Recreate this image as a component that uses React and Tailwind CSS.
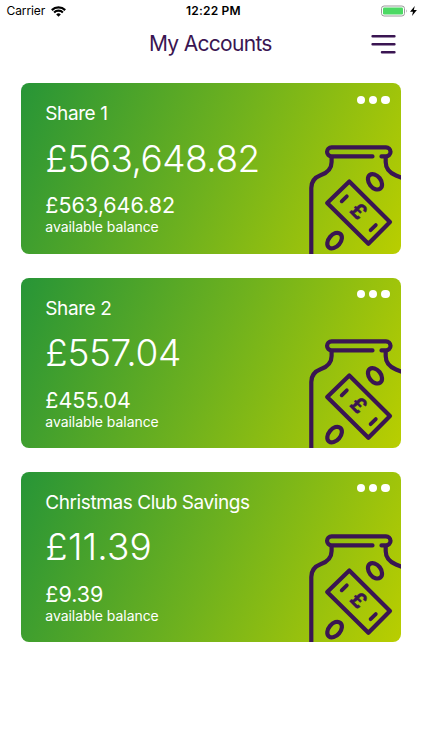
import React from 'react';

const accounts = [
  { name: 'Share 1', balance: '£563,648.82', available: '£563,646.82', tracking: 'tracking-[-0.5px]' },
  { name: 'Share 2', balance: '£557.04', available: '£455.04', tracking: 'tracking-[-0.35px]' },
  { name: 'Christmas Club Savings', balance: '£11.39', available: '£9.39', tracking: 'tracking-[0.15px]' },
];

const StatusBar = () => (
  <div className="relative flex h-[22px] items-center justify-between pl-[6.5px] pr-[4px] text-[12px] leading-[22px] text-black">
    <div className="flex items-center gap-[6px]">
      <span className="tracking-[-0.1px]">Carrier</span>
      <svg width="15" height="11" viewBox="0 0 15 11" fill="none" stroke="#000" strokeWidth="2.2">
        <path d="M0.8 4.1a9.6 9.6 0 0 1 13.4 0" />
        <path d="M3.1 6.5a6.3 6.3 0 0 1 8.8 0" />
        <path d="M7.5 10.8L5.2 8.4a3.3 3.3 0 0 1 4.6 0z" fill="#000" stroke="none" />
      </svg>
    </div>
    <span className="absolute left-[186px] top-0 font-semibold tracking-[0.2px]">12:22 PM</span>
    <svg width="37" height="12" viewBox="381 4.5 37 12">
      <rect x="381.5" y="5.5" width="23" height="10" rx="2.6" fill="#fff" stroke="#9a9a9a" />
      <rect x="383" y="7" width="20" height="7" rx="1.2" fill="#4cd964" />
      <path d="M406 8.7q1.4 1.8 0 3.6z" fill="#9a9a9a" />
      <path d="M414.8 5.4l-4.8 5.8h3l-1 4.4 4.9-6h-3.1z" fill="#000" />
    </svg>
  </div>
);

const Header = () => (
  <header className="flex h-[44px] items-center justify-between pl-[149px] pr-[26px] text-[#3a1552]">
    <h1 className="whitespace-nowrap text-[21px] leading-[44px] tracking-[-0.7px]">My Accounts</h1>
    <button aria-label="Menu">
      <svg width="25" height="20" viewBox="0 0 25 20" fill="none" stroke="#3a1552" strokeWidth="2.5" strokeLinecap="round">
        <path d="M1.6 2.2H23.4M1.6 10.2H23.4M11 18.2H23.4" />
      </svg>
    </button>
  </header>
);

const Jar = () => (
  <svg
    className="absolute bottom-0 right-0"
    width="100.7"
    height="118.6"
    viewBox="300 135 100.7 118.6"
    fill="none"
    stroke="#3a1552"
    strokeWidth="4.2"
    strokeLinecap="round"
    strokeLinejoin="round"
  >
    {/* lid */}
    <path d="M372.5 156.4H331.6a4.55 4.55 0 0 1 0-9.1H386a4.55 4.55 0 0 1 0 9.1H381.5" />
    {/* body */}
    <path d="M331.6 157V162C331.6 169 327 173 320.5 175.3C314.5 177.6 311.3 181.5 311.3 188V260" />
    <path d="M385.7 157V162C385.7 169 390 173 396 175.5L404 178.8" />
    {/* note */}
    <path d="M349.3 181.5L390 222L368.4 243.8L327.2 203z" />
    <path d="M346.8 196.3L341.7 201.3M375.8 225.1L370.6 230.2" strokeWidth="3.8" />
    {/* coins */}
    <ellipse cx="375" cy="181.8" rx="5.9" ry="8.6" transform="rotate(-38 375 181.8)" />
    <ellipse cx="334.6" cy="240.6" rx="5.9" ry="8.9" transform="rotate(40 334.6 240.6)" />
    <text
      transform="translate(358.8 211) rotate(45)"
      x="0"
      y="7.4"
      textAnchor="middle"
      fontSize="21"
      fontWeight="700"
      fill="#3a1552"
      stroke="#3a1552"
      strokeWidth="0.4"
    >
      £
    </text>
  </svg>
);

const AccountCard = ({ account }) => (
  <section className="relative h-[170.3px] overflow-hidden rounded-[8px] bg-[linear-gradient(114.2deg,#279537_0%,#6eb11e_50%,#b9ce00_100%)] pl-[24px] pt-[19px] text-white">
    <div className="absolute right-[11.2px] top-[12.3px] flex gap-[4px]">
      <span className="size-[8.2px] rounded-full bg-white" />
      <span className="size-[8.2px] rounded-full bg-white" />
      <span className="size-[8.2px] rounded-full bg-white" />
    </div>
    <Jar />
    <h2 className="text-[19px] leading-[24px] tracking-[-0.42px]">{account.name}</h2>
    <p className={`mt-[10.5px] text-[37px] font-[350] leading-[44px] ${account.tracking}`}>{account.balance}</p>
    <p className="mt-[11.5px] text-[21.5px] font-[370] leading-[26px]">{account.available}</p>
    <p className="text-[14px] leading-[17px] tracking-[-0.05px]">available balance</p>
  </section>
);

export default function App() {
  return (
    <div className="min-h-[750px] w-full bg-white font-['Inter',sans-serif]">
      <StatusBar />
      <Header />
      <main className="flex flex-col gap-[24px] px-[21.3px] pt-[17.3px]">
        {accounts.map((account) => (
          <AccountCard key={account.name} account={account} />
        ))}
      </main>
    </div>
  );
}
